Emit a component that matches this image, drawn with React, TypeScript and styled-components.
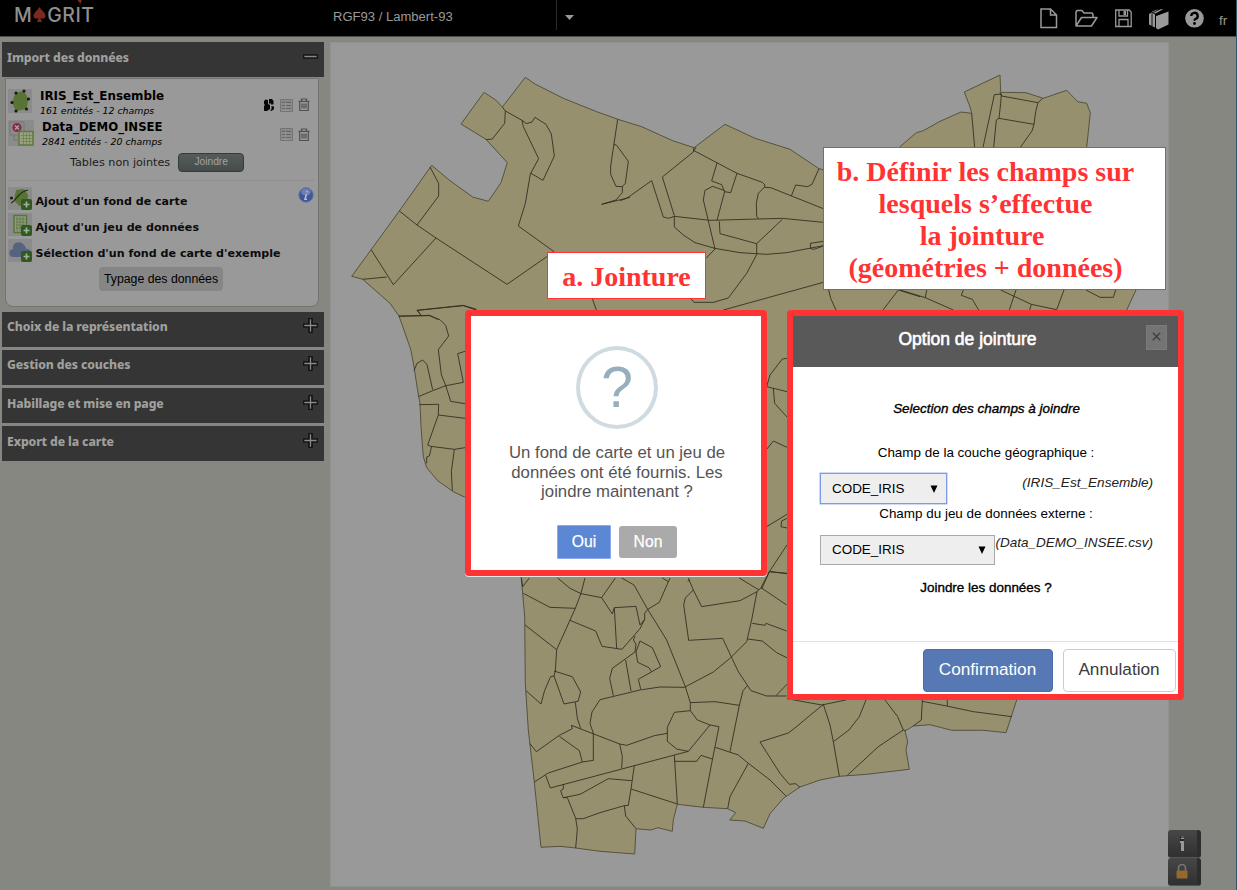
import React from "react";
import styled, { createGlobalStyle, css } from "styled-components";

const Global = createGlobalStyle`
  * { box-sizing: border-box; }
  html, body { margin: 0; padding: 0; }
  body { background: #868780; overflow: hidden; font-family: "Liberation Sans", Arial, sans-serif; }
`;

const Page = styled.div`
  position: relative;
  display: flex;
  flex-direction: column;
  width: 1237px;
  height: 890px;
  overflow: hidden;
  background: #868780;
  border-right: 1px solid #36536c;
`;

const TopBar = styled.header`
  display: flex;
  align-items: flex-start;
  height: 37px;
  flex: none;
  background: #000;
  border-bottom: 1px solid #4c4c49;
  color: #999;
`;

const Logo = styled.div`
  display: flex;
  align-items: flex-start;
  width: 333px;
  padding: 3px 0 0 14px;
  font: 500 19.5px/24px Inter, sans-serif;
  letter-spacing: 0.5px;
  color: #8f8f8f;
`;

const Spade = styled.svg`
  width: 13px;
  height: 15px;
  margin: 4px 1px 0 1px;
`;

const Accent = styled.span`
  position: relative;
  svg { position: absolute; left: 1px; top: -5px; }
`;

const Projection = styled.div`
  width: 223px;
  padding-top: 8px;
  font-size: 13.05px;
  line-height: 17px;
`;

const ProjectionToggle = styled.div`
  display: flex;
  width: 484px;
  height: 30px;
  padding: 15px 0 0 8px;
  border-left: 1px solid #2a2a2a;
`;

const Tools = styled.div`
  display: flex;
  gap: 16px;
  padding-top: 8px;
  svg { display: block; height: 22px; }
`;

const Lang = styled.span`
  margin-left: -2px;
  padding: 4px 0 0 0;
  font-size: 13.5px;
  line-height: 17px;
`;

const Main = styled.main`
  display: flex;
  align-items: flex-start;
  padding-top: 5px;
`;

const Sidebar = styled.aside`
  display: flex;
  flex-direction: column;
  width: 330px;
  padding: 0 6px 0 2px;
`;

const SectionHead = styled.div<{ $first?: boolean }>`
  display: flex;
  justify-content: space-between;
  height: ${(p) => (p.$first ? 35 : 34.8)}px;
  margin-bottom: ${(p) => (p.$first ? 1 : 3.3)}px;
  padding: ${(p) => (p.$first ? 7 : 6.4)}px 6px 0 5px;
  background: #353535;
  color: #a0a09e;
  font: 800 12.2px/18px "Noto Sans", sans-serif;
  letter-spacing: -0.1px;
  svg { display: block; }
`;

const Panel = styled.section`
  display: flex;
  flex-direction: column;
  width: 314px;
  height: 229px;
  margin: 0 0 5px 3px;
  background: #999;
  border: 1px solid #737470;
  border-radius: 0 0 8px 8px;
  padding: 9px 4px 0 2px;
  font-family: "DejaVu Sans", sans-serif;
  color: #000;
`;

const Layer = styled.div<{ $indent: number }>`
  display: flex;
  height: 31px;
  > div:first-child { padding-top: 1px; }
  > div:nth-child(2) { margin-left: ${(p) => p.$indent}px; flex: 1; }
`;

const LayerName = styled.div<{ $size: number }>`
  font-weight: 700;
  font-size: ${(p) => p.$size}px;
  line-height: 17px;
`;

const LayerInfo = styled.div`
  font-style: italic;
  font-size: 9.4px;
  line-height: 12px;
`;

const LayerTools = styled.div<{ $h: number }>`
  display: flex;
  gap: 5px;
  align-items: center;
  height: ${(p) => p.$h}px;
  padding-right: 4px;
`;

const JoinRow = styled.div`
  display: flex;
  align-items: center;
  gap: 8px;
  height: 31px;
  padding: 0 0 6px 62px;
  font-size: 11.2px;
  color: #1c1c1c;
  border-bottom: 1px solid #8e8e8e;
`;

const JoinButton = styled.button`
  width: 66px;
  height: 19px;
  padding: 0;
  border: 1px solid #363b3a;
  border-radius: 4px;
  background: linear-gradient(#555d5b, #454c4b);
  color: #a3a3a3;
  font: 10.2px/16px "Liberation Sans", sans-serif;
`;

const Actions = styled.div`
  display: flex;
  justify-content: space-between;
  padding-top: 6px;
`;

const ActionList = styled.div`
  display: flex;
  flex-direction: column;
  gap: 2px;
`;

const Action = styled.div`
  display: flex;
  gap: 3.5px;
  height: 24px;
  font-weight: 700;
  font-size: 11.1px;
  line-height: 29px;
  color: #0c0c0c;
  svg { flex: none; }
`;

const TypeButton = styled.button`
  align-self: center;
  width: 124px;
  height: 24px;
  margin-top: 4px;
  padding: 0;
  border: 0;
  border-radius: 4px;
  background: #868686;
  color: #000;
  font: 12.3px/22px "Liberation Sans", sans-serif;
`;

const MapPanel = styled.section`
  width: 839px;
  height: 845px;
  background: #999;
  border: 1px solid #929290;
  svg { display: block; margin: -1px; }
`;

const SideTools = styled.div`
  display: flex;
  flex-direction: column;
  align-self: flex-end;
  margin: 0 0 1px -1px;
`;

const SideTool = styled.div`
  display: flex;
  align-items: center;
  justify-content: center;
  width: 33px;
  height: 28px;
  padding-right: 1px;
  border-right: 4px solid #2d2d2d;
  border-bottom: 1px solid #555;
  border-radius: 3px;
  background: linear-gradient(#474747, #303030);
`;

const redFrame = css`
  position: absolute;
  border: 6px solid #ff3333;
  border-radius: 4px;
  background: #fff;
`;

const AskDialog = styled.div`
  ${redFrame}
  left: 465px;
  top: 310px;
  width: 302px;
  height: 266px;
  padding-left: 2px;
  box-shadow: 0 1px 0 #e8e8e4;
  display: flex;
  flex-direction: column;
  align-items: center;
  color: #545454;
`;

const QuestionMark = styled.div`
  width: 82px;
  height: 83px;
  margin: 30px 0 14px;
  border: 4px solid #d0dbe1;
  border-radius: 50%;
  color: #97aebe;
  font-size: 57px;
  line-height: 74px;
  text-align: center;
`;

const AskText = styled.p`
  margin: 0;
  font-size: 16.75px;
  line-height: 19.7px;
  text-align: center;
`;

const AskButtons = styled.div`
  display: flex;
  gap: 8px;
  margin-top: 23px;
`;

const AskButton = styled.button<{ $primary?: boolean }>`
  width: ${(p) => (p.$primary ? 54 : 58)}px;
  height: ${(p) => (p.$primary ? 34 : 32)}px;
  margin-top: ${(p) => (p.$primary ? 0 : 1)}px;
  padding: 0;
  border: ${(p) => (p.$primary ? "1px solid #8aa6ee" : "0")};
  border-radius: ${(p) => (p.$primary ? 1 : 3)}px;
  background: ${(p) => (p.$primary ? "#5b87d4" : "#aaa")};
  color: #fff;
  font: 15.7px/30px "Liberation Sans", sans-serif;
  -webkit-text-stroke: 0.25px #fff;
`;

const Callout = styled.div<{ $x: number; $y: number; $w: number; $h: number }>`
  position: absolute;
  left: ${(p) => p.$x}px;
  top: ${(p) => p.$y}px;
  width: ${(p) => p.$w}px;
  height: ${(p) => p.$h}px;
  padding-top: 8px;
  border: 1px solid #ff3333;
  background: #fff;
  color: #ff3333;
  font: 700 28px/32px "Liberation Serif", serif;
  text-align: center;
  white-space: pre;
`;

const CalloutLines = styled.div<{ $shift?: number }>`
  padding-right: ${(p) => p.$shift ?? 0}px;
`;

const JoinDialog = styled.div`
  ${redFrame}
  left: 787px;
  top: 310px;
  width: 397px;
  height: 390px;
  display: flex;
  flex-direction: column;
`;

const DialogHead = styled.div`
  display: flex;
  align-items: flex-start;
  height: 51px;
  padding: 9px 11px 0 0;
  background: #595959;
  color: #fff;
`;

const DialogTitle = styled.div`
  flex: 1;
  padding: 3px 4px 0 0;
  font-size: 17.5px;
  line-height: 22px;
  text-align: center;
  -webkit-text-stroke: 0.6px #fff;
`;

const CloseButton = styled.div`
  display: flex;
  align-items: center;
  justify-content: center;
  width: 21px;
  height: 25px;
  background: #747474;
  border: 1px solid #7b7b7b;
  padding-bottom: 2px;
`;

const DialogBody = styled.div`
  display: flex;
  flex-direction: column;
  height: 275px;
  padding: 34px 25px 0 27px;
  border-bottom: 1px solid #e2e2e2;
  color: #000;
  font-size: 13.45px;
  line-height: 16px;
  text-align: center;
`;

const Strong = styled.div<{ $italic?: boolean }>`
  font-style: ${(p) => (p.$italic ? "italic" : "normal")};
  -webkit-text-stroke: 0.35px #000;
`;

const FieldLabel = styled.div<{ $gap: number }>`
  margin-top: ${(p) => p.$gap}px;
  padding-right: 1px;
`;

const FieldRow = styled.div<{ $gap: number }>`
  display: flex;
  justify-content: space-between;
  margin: ${(p) => p.$gap}px 0 0;
  height: 31px;
`;

const Select = styled.div<{ $w: number; $focus?: boolean }>`
  display: flex;
  align-items: center;
  justify-content: space-between;
  width: ${(p) => p.$w}px;
  height: ${(p) => (p.$focus ? 31 : 30)}px;
  padding: 0 8px 0 11px;
  border: ${(p) => (p.$focus ? "1px solid #7b9be8" : "1px solid #a9a9a9")};
  box-shadow: ${(p) => (p.$focus ? "0 0 0 0.5px #9db5ee" : "none")};
  background: #eee;
`;

const Source = styled.div<{ $top: number; $size: number }>`
  font-style: italic;
  font-size: ${(p) => p.$size}px;
  color: #222;
  padding-top: ${(p) => p.$top}px;
  white-space: nowrap;
`;

const DialogFoot = styled.div`
  display: flex;
  justify-content: flex-end;
  gap: 10px;
  padding: 7px 2px 0 0;
`;

const FootButton = styled.button<{ $primary?: boolean }>`
  width: ${(p) => (p.$primary ? 130 : 113)}px;
  height: 43px;
  padding: 0 1px 2px 0;
  border: 1px solid ${(p) => (p.$primary ? "#486da8" : "#ccc")};
  border-radius: 4px;
  background: ${(p) => (p.$primary ? "#5679b6" : "#fff")};
  color: ${(p) => (p.$primary ? "#fff" : "#3a3a3a")};
  font: 17.2px/39px "Liberation Sans", sans-serif;
`;

const Plus = ({ minus }: { minus?: boolean }) => (
  <svg width="15" height="15" viewBox="0 0 15 15">
    <path
      d={minus ? "M.5 6h14v3H.5z" : "M.5 6H6V.5h3V6h5.500v3H9v5.500H6V9H.5z"}
      fill="#8a8a8a"
      stroke="#141414"
      strokeWidth="1.700"
    />
  </svg>
);

const TableIcon = () => (
  <svg width="13" height="13" viewBox="0 0 13 13">
    <path d="M.5 .5h12v12H.5z" fill="#8b8b8b" stroke="#747474" />
    <path d="M2 3.500h3M6 3.500h5M2 6.500h3M6 6.500h5M2 9.500h3M6 9.500h5" stroke="#666" strokeWidth="1.400" />
    <path d="M2 5h9M2 8h9M2 11h9" stroke="#a5a5a5" strokeWidth=".7" />
  </svg>
);

const TrashIcon = () => (
  <svg width="12" height="14" viewBox="0 0 12 14" fill="none" stroke="#505050" strokeWidth="1.200">
    <path d="M.5 3.300h11M3.500 3V1h5v2M1.700 3.500v9h8.600v-9M4 5.500v5M6 5.500v5M8 5.500v5" />
  </svg>
);

const PuzzleIcon = () => (
  <svg width="12" height="14" viewBox="0 0 12 14">
    <path d="M1 3l1.500-1.500L5 2v4l2 1v4l-3 2H1V8l1-1-1-1zM6 1h3l1.500 2v3.500H8L7.500 5 6 6zM8.500 8l2.500 .5V11l-2 1.800H7L8.500 11z" fill="#080808" />
  </svg>
);

const PolygonIcon = () => (
  <svg width="24" height="24" viewBox="0 0 24 24">
    <path d="M0 0h24v24H0z" fill="#8b8b8b" />
    <path d="M7.500 4L16 2l4.500 8-2 10L8 22 4 13.500z" fill="#587435" />
    <g fill="#161a12">
      <circle cx="8" cy="4" r="1.600" /><circle cx="16" cy="2" r="1.600" /><circle cx="20.500" cy="10" r="1.600" />
      <circle cx="18.500" cy="20" r="1.600" /><circle cx="8" cy="22" r="1.600" /><circle cx="4" cy="13.500" r="1.600" />
    </g>
  </svg>
);

const DataIcon = () => (
  <svg width="26" height="26" viewBox="0 0 26 26">
    <path d="M0 0h26v26H0z" fill="#8b8b8b" />
    <path d="M2 2h14v13H2z" fill="none" stroke="#777" />
    <path d="M6 15v5h5" fill="none" stroke="#777" />
    <circle cx="9" cy="7.500" r="4.600" fill="#8a2848" />
    <path d="M7 5.500l4 4M11 5.500l-4 4" stroke="#aaa" strokeWidth="1.300" />
    <path d="M11 11.500h14V25H11z" fill="#9aa184" stroke="#5c7a38" strokeWidth="1.500" />
    <path d="M13 15.500h11M13 18.500h11M13 21.500h11M15.500 13v11M18.500 13v11M21.500 13v11" stroke="#6b8648" strokeWidth=".8" />
  </svg>
);

const AddBadge = () => (
  <g>
    <rect x="13" y="12" width="11" height="11" rx="2" fill="#2f5a1e" />
    <path d="M18.500 14.500v6M15.500 17.500h6" stroke="#aaa" strokeWidth="1.700" />
  </g>
);

const AddMapIcon = () => (
  <svg width="24" height="23" viewBox="0 0 24 23">
    <path d="M0 0h24v23H0z" fill="#8b8b8b" />
    <path d="M8 3l8-1 4 6-1 10-8 1-5-6z" fill="#587435" />
    <path d="M3 16C9 14 9 5 20 3" fill="none" stroke="#20251c" strokeWidth="1.200" />
    <circle cx="3.500" cy="11" r="1.500" fill="#161a12" />
    <AddBadge />
  </svg>
);

const AddTableIcon = () => (
  <svg width="24" height="23" viewBox="0 0 24 23">
    <path d="M0 0h24v23H0z" fill="#8b8b8b" />
    <path d="M6 2.500h12.500v17H6z" fill="#929a80" stroke="#557537" strokeWidth="1.400" />
    <path d="M8 6h9M8 9h9M8 12h9M8 15h9M9 4v14M12 4v14M15 4v14" stroke="#5f7d42" strokeWidth=".9" />
    <AddBadge />
  </svg>
);

const CloudIcon = () => (
  <svg width="24" height="23" viewBox="0 0 24 23">
    <path d="M0 0h24v23H0z" fill="#8b8b8b" />
    <path d="M6 18a4 4 0 01-1-8 6 6 0 0111-4 5.500 5.500 0 012 4 4 4 0 012 8z" fill="#56637e" />
    <AddBadge />
  </svg>
);

const InfoIcon = () => (
  <svg width="16" height="16" viewBox="0 0 16 16">
    <circle cx="8" cy="8" r="7.200" fill="#3f5799" stroke="#6473a0" />
    <ellipse cx="8" cy="5" rx="5" ry="3.500" fill="#6c7fb4" />
    <path d="M9 3.800v1.800M8.500 7L7 12.200h2" stroke="#b4bbcc" strokeWidth="1.600" fill="none" />
  </svg>
);

const OUTLINE =
  "M525.3 77.3L535 84 563.300 98.300 596.700 111.700 620 120 641.700 126.700 672.700 140.700 694 147.700 725 124.300 755 138.300 790 149.300 819 168.700 824 170 890 156 899.300 147.300 916.300 132.700 923.300 130.700 940 121.300 961 112 971.700 113.300 970.300 107.700 964.300 92 1000 75 1000.700 92.300 1026 92.700 1043.300 98.300 1066.700 90.300 1077.700 101.700 1086.700 103.300 1090.300 112.700 1086.700 147.300 1136 290 1126.700 310 1050 600 1016.700 700 1006 732.700 983.300 730.300 951.700 730.300 930 724.700 913.300 726 905 731 907.700 741.700 906 750 909.300 769.300 866.700 774.300 839.300 776.300 820 780 800 787 783.300 798.300 770 813.700 763.300 828.300 745 821 729.700 820 735.700 812.700 727.700 808.700 703.300 807.300 677.300 804.300 673.300 820 672.300 831.300 658 827.700 651 830 636 828.700 634.700 854 600 851.300 575.700 848 560 846.300 541 847.300 534.300 782 528.300 730 525.300 683.300 524.700 616.700 521.300 578 500 510 465 497.300 453.300 491.700 437.700 480.700 426.700 467.700 423.300 456.700 421 426.700 420 403.300 417.300 388.300 414 366.700 410.700 349.300 399 316 390 303.300 362.700 279.300 351.700 276.300 399.300 211 431.700 165.300 450 180.700 472.700 197 488.300 201.300 501 182.700 507.300 162.700 486 139.300 461 124 484 92.300 495.700 100 502.300 107Z";

/* Inner borders, grouped by map tile; each tile is drawn at triple resolution. */
const TILES: { x: number; y: number; d: string }[] = [
  {
    x: 330, y: 60,
    d: "M517 141L526 153 524 190 487 237 468 239M526 153L576 181 590 191 606 186 615 172 648 193 664 222 673 288 639 361 603 340M576 181L580 200 626 296 601 342 586 430 565 498 672 575 531 673 318 534 261 495 208 453M300 321L326 370 326 408 261 495M318 534L190 674 124 570M98 658L170 651M863 178L842 318 842 343 858 379 877 380 886 370 895 304 860 256 852 253M877 380L877 398 858 420 815 433 900 412M206 769L299 766 325 779M438 750L400 737 262 751 272 765M787 716L799 750",
  },
  {
    x: 620, y: 60,
    d: "M222 263L220 276 127 351 163 467M228 262L222 272 351 340 427 367 435 375 433 382 452 383 610 446M0 422L20 415 95 362 130 471 146 475 163 469 270 481 487 475 610 487M291 309L275 363 305 374 314 395 332 398 351 340M314 395L291 481M314 392L278 379 255 391 250 420 264 478 285 567 258 595M433 382L415 400 409 430 410 470 416 475M597 326L576 373 563 380 527 375 514 408M163 469V501L190 525 225 548 285 565 360 578 440 583 500 578 610 557M298 484L300 521 410 551 487 478M410 551V584L380 640 325 714 280 727H222L213 716M610 544L571 550 572 566 582 568 610 558M310 750L610 667M626 690L632 715 648 750M789 750L835 690 900 710",
  },
  {
    x: 900, y: 60,
    d: "M215 160L224 262M249 262L283 104 304 102 302 130 297 175 289 180 281 262M300 97L305 108 414 128 428 115M414 128L407 155 402 193 297 175M402 193L396 213 361 262M0 690L76 713 160 750M80 690L76 713M190 690L184 706 217 718 236 750M302 690L394 733 470 749 492 690M348 690L328 750M394 733L389 750M558 690L600 712H640L647 690",
  },
  {
    x: 340, y: 300,
    d: "M177 48L268 47 300 59 317 76 326 108 295 149 304 224 318 259 332 304 375 311M222 212L231 190 248 180 261 194 278 269M235 290L278 272 318 257 370 247 353 161 375 154M238 314L296 313 295 345 263 435 272 439 343 448 375 443M295 345L375 355M275 439L268 468 260 471V490M343 448L334 515 337 572M410 28L370 16 231 31 242 44",
  },
  {
    x: 460, y: 300,
    d: "M920 260L930 225 967 177 981 175M920 260L981 275M940 265L944 310 981 351M920 448L940 423 981 442M920 680L981 643M981 655L965 663 963 680 981 684M981 735L928 815 905 867M928 815L981 820",
  },
  {
    x: 500, y: 570,
    d: "M64 24L68 50 88 24M70 70L150 112 226 115 243 70 255 24M173 24L210 55 243 71 305 83 346 24M365 24L402 45 443 118 500 210 556 350 571 398 571 422M305 83L337 132 343 113 408 109 420 165 434 148M75 165L170 239 226 115M210 151L287 183 306 229 366 238 420 176 434 148 434 130 443 118 478 97 510 24M487 24L505 35M343 113L350 236M405 198L400 210 408 222 405 246 337 295 329 325 340 377M377 270L393 363M408 246L420 213 457 233 482 290 415 328 422 357M408 246L413 277 447 293 454 305M170 239L166 303 162 318 152 320 134 361 123 402 78 362M162 303L217 320 242 366 234 394 192 402 162 318M226 397L232 445 242 476M280 490L270 460 276 426 300 389 420 360 480 351 553 352 640 306 690 265 740 215 755 150 771 65 783 53 808 5M571 398L645 395 718 406M565 24L580 60 605 110 720 92 771 65M563 34L570 30M580 60L556 84 551 105 566 211 668 205 696 265 715 305 753 362 800 378 860 378M718 24L777 60M783 53L860 105M757 160L795 166 798 160 860 183M743 207L787 213 830 248 862 264M862 342L828 377M742 347L729 362 718 406 690 545M571 422L523 427 502 472V514L530 537 565 544 630 465 657 470 637 570 610 712M571 422L592 450 630 465M502 490L463 497 380 526 359 522 214 466 217 476 178 496 109 545 90 521M178 499L238 542 247 576M280 490V571L247 576 145 609 103 636M137 616L151 654 565 544M359 522L367 560 365 595M190 643V657L182 662 189 683 202 683 227 745 232 777 227 834M190 683L240 673 325 626 395 632M403 586L393 657 385 706 373 707 300 728 250 746H227M393 657L532 702 523 556M373 707L377 738 408 776M523 574H590L603 556 637 567M646 532L715 555 745 580 810 630 858 678M745 580L690 680 683 716M900 462L865 489 780 516 840 610 868 643 887 641 900 652",
  },
  {
    x: 770, y: 570,
    d: "M51 386L155 405 228 390M89 462L160 403 180 465 190 515 208 619M288 390L268 440 237 480 190 515M345 390L383 440 400 480 325 530 232 616M400 480L407 482M457 390L454 450 430 468M457 394L530 408 610 425 726 440M532 390V408M0 5L51 11",
  },
];

const RegionMap = () => (
  <svg width="839" height="845" viewBox="330 42 839 845">
    <path d={OUTLINE} fill="#97906e" stroke="#55533f" strokeWidth="1" />
    {TILES.map((t) => (
      <path
        key={`${t.x}-${t.y}`}
        transform={`translate(${t.x} ${t.y}) scale(0.33333)`}
        d={t.d}
        fill="none"
        stroke="#2e2c20"
        strokeWidth="2.600"
        strokeLinejoin="round"
      />
    ))}
  </svg>
);

const SECTIONS = ["Choix de la représentation", "Gestion des couches", "Habillage et mise en page", "Export de la carte"];

export default function App() {
  return (
    <Page>
      <Global />
      <TopBar>
        <Logo>
          M
          <Spade viewBox="0 0 13 15">
            <path d="M6.500 0C8 3 12.500 5.500 12.500 9c0 3-3.500 3.500-5 1.700L9 15H4l1.500-4.300C4 12.500.5 12 .5 9 .5 5.500 5 3 6.500 0z" fill="#79291f" />
          </Spade>
          GR
          <Accent>
            I
            <svg width="6" height="8" viewBox="0 0 6 8"><path d="M1 1.500C2 0 4 0 5 1.500L4 4.500 2.500 7l.300-2.500L1 3.500z" fill="#79291f" /></svg>
          </Accent>
          T
        </Logo>
        <Projection>RGF93 / Lambert-93</Projection>
        <ProjectionToggle>
          <svg width="9" height="5" viewBox="0 0 9 5"><path d="M0 0h9L4.500 5z" fill="#999" /></svg>
        </ProjectionToggle>
        <Tools>
          <svg width="18" viewBox="0 0 18 22" fill="none" stroke="#999" strokeWidth="1.500">
            <path d="M1 1h9.500l6 6v12.500H1zM10.500 1v6h6" />
          </svg>
          <svg width="24" viewBox="0 0 24 22" fill="none" stroke="#999" strokeWidth="1.500" strokeLinejoin="round">
            <path d="M2 18V4l1-1.500h5l2 2.500h8l1 1.500V9M2 18L7.500 9.500H23L17.500 18z" />
          </svg>
          <svg width="19" viewBox="0 0 19 22" fill="none" stroke="#999" strokeWidth="1.300">
            <path d="M1.700 2h13.500l2 2v14.500H1.700zM5 2v6h8.500V2M5 18.500v-7h9v7" />
            <path d="M9.500 3v4h2.500V3z" fill="#999" stroke="none" />
          </svg>
          <svg width="20" viewBox="0 0 20 22">
            <path d="M0 6l3-1.500 3 2v13l-6-3zM2.500 4l4-2 8-1-8 4.500z" fill="#999" />
            <path d="M7 8l12.500-4.500v13L9 21.500 7 20z" fill="#999" />
            <path d="M3 5.500v12.500M6.500 7v13M3 5l8-4M7 7.500l11-4.500" stroke="#000" strokeWidth=".9" />
          </svg>
          <svg width="20" viewBox="0 0 20 22">
            <circle cx="9.500" cy="10.300" r="9.300" fill="#999" />
            <path d="M6.300 8a3.200 3.200 0 113.900 3.100c-.5.200-.7.500-.7 1.700" fill="none" stroke="#000" strokeWidth="2.300" />
            <circle cx="9.500" cy="15.500" r="1.400" fill="#000" />
          </svg>
          <Lang>fr</Lang>
        </Tools>
      </TopBar>

      <Main>
        <Sidebar>
          <SectionHead $first>Import des données<Plus minus /></SectionHead>
          <Panel>
            <Layer $indent={8}>
              <div><PolygonIcon /></div>
              <div>
                <LayerName $size={11.9}>IRIS_Est_Ensemble</LayerName>
                <LayerInfo>161 entités - 12 champs</LayerInfo>
              </div>
              <LayerTools $h={34}><PuzzleIcon /><TableIcon /><TrashIcon /></LayerTools>
            </Layer>
            <Layer $indent={8}>
              <div><DataIcon /></div>
              <div>
                <LayerName $size={11.7}>Data_DEMO_INSEE</LayerName>
                <LayerInfo>2841 entités - 20 champs</LayerInfo>
              </div>
              <LayerTools $h={31}><TableIcon /><TrashIcon /></LayerTools>
            </Layer>
            <JoinRow>Tables non jointes<JoinButton>Joindre</JoinButton></JoinRow>
            <Actions>
              <ActionList>
                <Action><AddMapIcon />Ajout d'un fond de carte</Action>
                <Action><AddTableIcon />Ajout d'un jeu de données</Action>
                <Action><CloudIcon />Sélection d'un fond de carte d'exemple</Action>
              </ActionList>
              <InfoIcon />
            </Actions>
            <TypeButton>Typage des données</TypeButton>
          </Panel>
          {SECTIONS.map((s) => (
            <SectionHead key={s}>{s}<Plus /></SectionHead>
          ))}
        </Sidebar>
        <MapPanel><RegionMap /></MapPanel>
        <SideTools>
          <SideTool>
            <svg width="6" height="15" viewBox="0 0 6 15"><path d="M2 0h3v3H2zM1 5h4v10H2V7H1z" fill="#999" /><path d="M1 1h4M1 4h4" stroke="#111" /></svg>
          </SideTool>
          <SideTool>
            <svg width="12" height="15" viewBox="0 0 12 15">
              <path d="M2.500 7V4a3.500 3.500 0 017 0v3" fill="none" stroke="#777" strokeWidth="1.600" />
              <rect x=".5" y="6.500" width="11" height="8" rx="1" fill="#94692a" />
            </svg>
          </SideTool>
        </SideTools>
      </Main>

      <Callout $x={547} $y={252} $w={159} $h={47}>a. Jointure</Callout>
      <Callout $x={823} $y={147} $w={343} $h={143}>
        <CalloutLines $shift={18}>{"b. Définir les champs sur\nlesquels s’effectue"}</CalloutLines>
        <CalloutLines $shift={25}>la jointure</CalloutLines>
        <CalloutLines $shift={18}>(géométries + données)</CalloutLines>
      </Callout>

      <AskDialog>
        <QuestionMark>?</QuestionMark>
        <AskText>
          Un fond de carte et un jeu de<br />données ont été fournis. Les<br />joindre maintenant ?
        </AskText>
        <AskButtons>
          <AskButton $primary>Oui</AskButton>
          <AskButton>Non</AskButton>
        </AskButtons>
      </AskDialog>

      <JoinDialog>
        <DialogHead>
          <DialogTitle>Option de jointure</DialogTitle>
          <CloseButton>
            <svg width="9" height="9" viewBox="0 0 9 9"><path d="M.8.8l7.400 7.400M8.200.8L.8 8.200" stroke="#3e3e3e" strokeWidth="1.400" /></svg>
          </CloseButton>
        </DialogHead>
        <DialogBody>
          <Strong $italic>Selection des champs à joindre</Strong>
          <FieldLabel $gap={28}>Champ de la couche géographique :</FieldLabel>
          <FieldRow $gap={12}>
            <Select $w={127} $focus>CODE_IRIS<svg width="8" height="8" viewBox="0 0 8 8"><path d="M.5 .5h7L4 8z" /></svg></Select>
            <Source $top={2} $size={13.6}>(IRIS_Est_Ensemble)</Source>
          </FieldRow>
          <FieldLabel $gap={2}>Champ du jeu de données externe :</FieldLabel>
          <FieldRow $gap={13}>
            <Select $w={175}>CODE_IRIS<svg width="8" height="8" viewBox="0 0 8 8"><path d="M.5 .5h7L4 8z" /></svg></Select>
            <Source $top={0} $size={13.5}>(Data_DEMO_INSEE.csv)</Source>
          </FieldRow>
          <FieldLabel $gap={14}><Strong>Joindre les données ?</Strong></FieldLabel>
        </DialogBody>
        <DialogFoot>
          <FootButton $primary>Confirmation</FootButton>
          <FootButton>Annulation</FootButton>
        </DialogFoot>
      </JoinDialog>
    </Page>
  );
}
